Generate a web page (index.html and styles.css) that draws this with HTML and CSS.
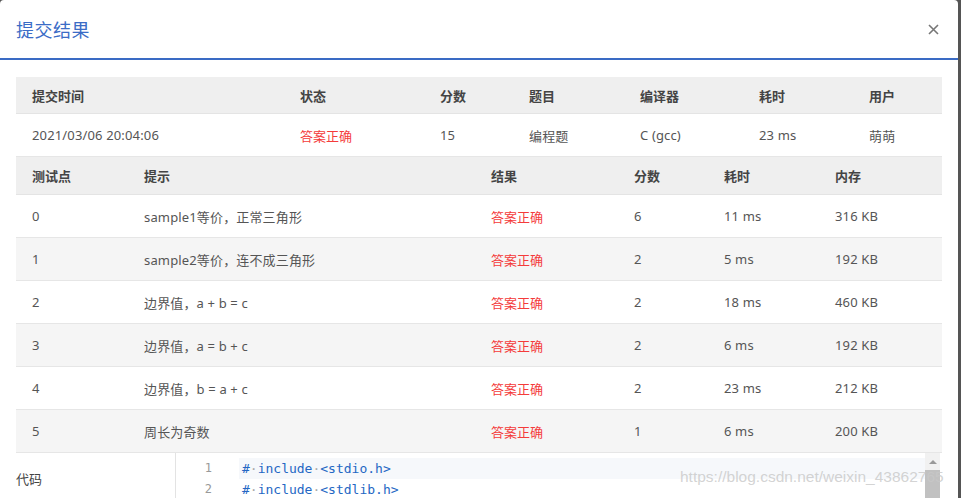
FILE: index.html
```html
<!DOCTYPE html>
<html lang="zh-CN">
<head>
<meta charset="utf-8">
<title>提交结果</title>
<link rel="stylesheet" href="styles.css">
</head>
<body>
<div class="dialog">
  <div class="dialog-header">
    <h2 class="dialog-title">提交结果</h2>
    <button class="close" aria-label="close">
      <svg width="11" height="11" viewBox="0 0 11 11"><path d="M1 1L10 10M10 1L1 10" stroke="#777" stroke-width="1.6" fill="none"/></svg>
    </button>
  </div>
  <div class="dialog-body">
    <table class="grid">
      <colgroup><col style="width:268px"><col style="width:140px"><col style="width:89px"><col style="width:111px"><col style="width:119px"><col style="width:110px"><col style="width:89px"></colgroup>
      <thead><tr><th>提交时间</th><th>状态</th><th>分数</th><th>题目</th><th>编译器</th><th>耗时</th><th>用户</th></tr></thead>
      <tbody><tr class="plain"><td>2021/03/06 20:04:06</td><td class="ok">答案正确</td><td>15</td><td>编程题</td><td>C (gcc)</td><td>23 ms</td><td>萌萌</td></tr></tbody>
    </table>
    <table class="grid cases">
      <colgroup><col style="width:112px"><col style="width:347px"><col style="width:143px"><col style="width:90px"><col style="width:111px"><col style="width:123px"></colgroup>
      <thead><tr><th>测试点</th><th>提示</th><th>结果</th><th>分数</th><th>耗时</th><th>内存</th></tr></thead>
      <tbody>
        <tr><td>0</td><td>sample1等价，正常三角形</td><td class="ok">答案正确</td><td>6</td><td>11 ms</td><td>316 KB</td></tr>
        <tr><td>1</td><td>sample2等价，连不成三角形</td><td class="ok">答案正确</td><td>2</td><td>5 ms</td><td>192 KB</td></tr>
        <tr><td>2</td><td>边界值，a + b = c</td><td class="ok">答案正确</td><td>2</td><td>18 ms</td><td>460 KB</td></tr>
        <tr><td>3</td><td>边界值，a = b + c</td><td class="ok">答案正确</td><td>2</td><td>6 ms</td><td>192 KB</td></tr>
        <tr><td>4</td><td>边界值，b = a + c</td><td class="ok">答案正确</td><td>2</td><td>23 ms</td><td>212 KB</td></tr>
        <tr><td>5</td><td>周长为奇数</td><td class="ok">答案正确</td><td>1</td><td>6 ms</td><td>200 KB</td></tr>
      </tbody>
    </table>
    <div class="code-row">
      <div class="code-label">代码</div>
      <div class="editor">
        <div class="gutter"><div class="ln">1</div><div class="ln">2</div></div>
        <div class="lines">
          <div class="line active">#<span class="ws">·</span>include<span class="ws">·</span>&lt;stdio.h&gt;</div>
          <div class="line">#<span class="ws">·</span>include<span class="ws">·</span>&lt;stdlib.h&gt;</div>
        </div>
        <div class="scrollbar"><div class="arrow"></div><div class="thumb"></div></div>
      </div>
    </div>
  </div>
  <div class="watermark">https://blog.csdn.net/weixin_43862765</div>
</div>
</body>
</html>
```

FILE: styles.css
```css
html, body {
  margin: 0;
  padding: 0;
  height: 100%;
  background: #555;
  overflow: hidden;
}
body {
  font-family: "Noto Sans", "Noto Sans CJK SC", sans-serif;
  font-size: 13px;
  color: #444;
}
.dialog {
  position: relative;
  width: 958px;
  height: 498px;
  background: #fff;
  border-radius: 4px 4px 0 0;
  overflow: hidden;
}
.dialog-header {
  height: 58px;
  display: flex;
  align-items: center;
  justify-content: space-between;
  padding: 0 18px 0 16px;
  border-bottom: 2px solid #3a6bc4;
}
.dialog-title {
  margin: 0;
  font-size: 18px;
  font-weight: normal;
  color: #3b6cc6;
  letter-spacing: 0.5px;
}
.close {
  border: 0;
  background: none;
  padding: 0;
  width: 14px;
  height: 14px;
  display: flex;
  align-items: center;
  justify-content: center;
}
.dialog-body {
  padding: 17px 16px 0;
}
.grid {
  width: 926px;
  border-collapse: collapse;
  table-layout: fixed;
}
.grid th {
  height: 36px;
  padding: 0 0 0 16px;
  text-align: left;
  font-weight: bold;
  color: #444;
  background: #efefef;
  border-bottom: 1px solid #e4e4e4;
}
.cases th {
  height: 37px;
}
.grid td {
  height: 42px;
  padding: 0 0 0 16px;
  color: #555;
  border-bottom: 1px solid #e6e6e6;
  white-space: nowrap;
  letter-spacing: 0.15px;
}
.grid tbody tr:nth-child(even) td {
  background: #f5f5f5;
}
.grid tbody tr:nth-child(odd) td {
  background: #fff;
}
.grid td.ok {
  color: #f43b3b;
  letter-spacing: 0;
}
.code-row {
  display: flex;
  width: 926px;
  height: 60px;
}
.code-label {
  width: 159px;
  padding-top: 16px;
  color: #444;
  font-size: 13px;
}
.editor {
  flex: 1;
  display: flex;
  border-left: 1px solid #e3e3e3;
  padding-right: 2px;
}
.gutter {
  width: 63px;
  padding-top: 5px;
}
.ln {
  height: 21px;
  line-height: 21px;
  width: 36px;
  text-align: right;
  color: #999;
  font-family: "DejaVu Sans Mono", monospace;
  font-size: 12px;
}
.lines {
  flex: 1;
  padding-top: 5px;
}
.line {
  height: 21px;
  line-height: 21px;
  padding-left: 3px;
  font-family: "DejaVu Sans Mono", monospace;
  font-size: 13px;
  color: #2467c4;
}
.line.active {
  background: #f6f8fb;
}
.ws {
  color: #aaa;
}
.scrollbar {
  width: 15px;
  background: #f1f1f1;
  display: flex;
  flex-direction: column;
  align-items: center;
}
.arrow {
  margin-top: 7px;
  width: 0;
  height: 0;
  border-left: 4px solid transparent;
  border-right: 4px solid transparent;
  border-bottom: 4px solid #999;
}
.thumb {
  margin-top: 6px;
  width: 15px;
  flex: 1;
  background: #c1c1c1;
}
.watermark {
  position: absolute;
  left: 680px;
  top: 468px;
  font-family: "Liberation Sans", Arial, sans-serif;
  font-size: 15.5px;
  color: rgba(200, 200, 200, 0.8);
  white-space: nowrap;
}
```
